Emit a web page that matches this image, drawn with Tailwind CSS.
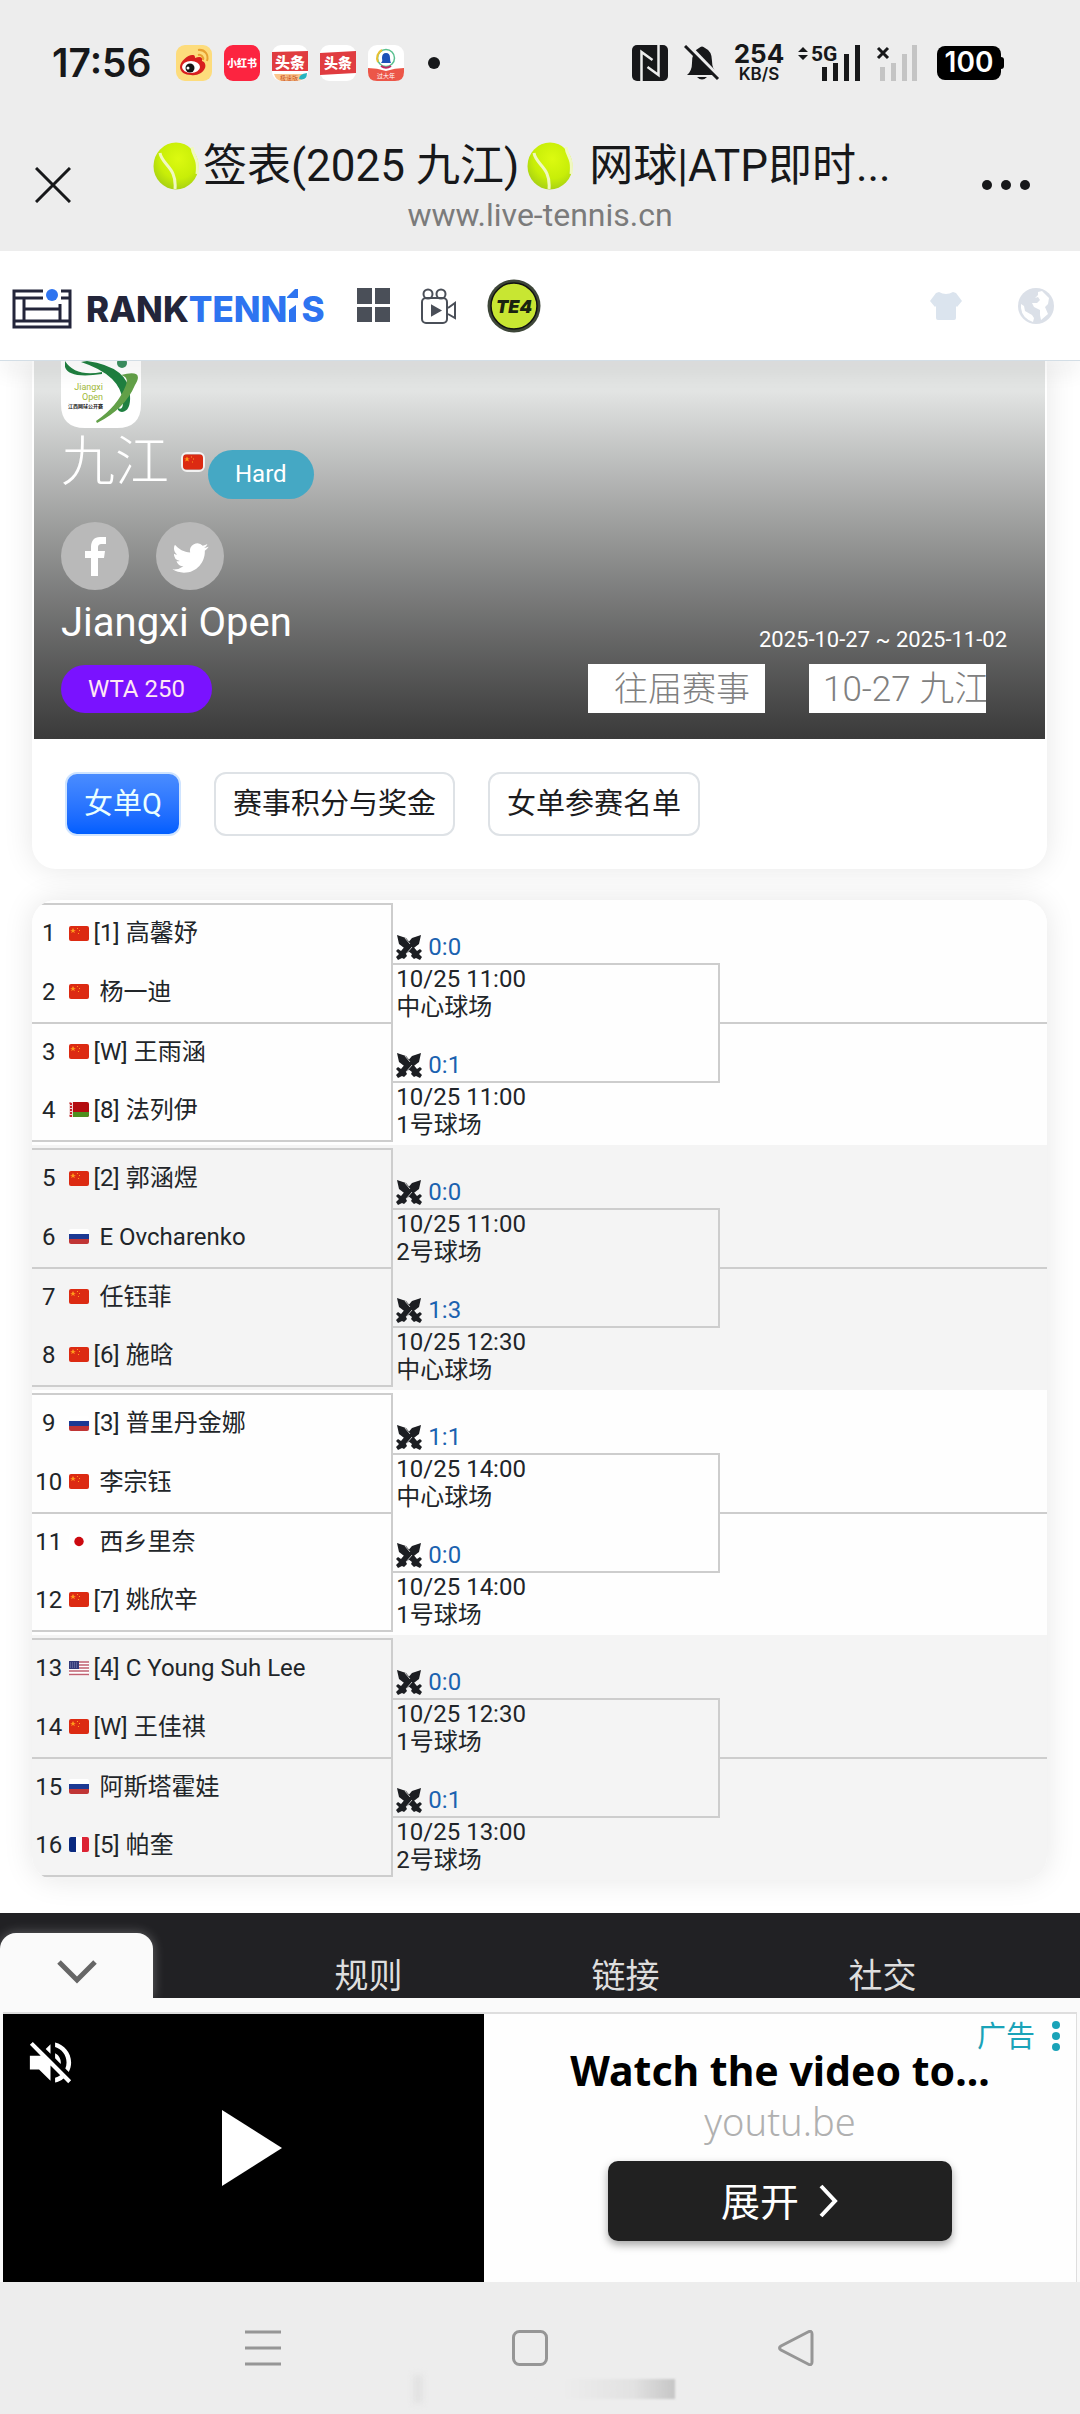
<!DOCTYPE html>
<html lang="zh-CN">
<head>
  <meta charset="UTF-8" />
  <meta name="viewport" content="width=device-width, initial-scale=1.0"/>
  <title>签表(2025 九江) 网球|ATP即时比分</title>
  <script src="https://cdn.jsdelivr.net/npm/@tailwindcss/browser@4"></script>
</head>
<body class="bg-white font-[Roboto,'Noto_Sans_CJK_SC',sans-serif] text-[#212529] text-2xl">

<!-- Shared icons -->
<svg class="absolute size-0">
  <defs>
    <radialGradient id="ballFill" cx=".55" cy=".35" r=".7"><stop offset="0" stop-color="#dcfa10"/><stop offset=".6" stop-color="#c8ee08"/><stop offset="1" stop-color="#a2cc14"/></radialGradient>
  </defs>
  <symbol id="ball" viewBox="0 0 46 48">
    <ellipse cx="23" cy="24" rx="22.500" ry="23.500" fill="url(#ballFill)"/>
    <path d="M7 11c2 12 17 14 15 36M39 5c1 10 7 10 5 27" fill="none" stroke="#f0f8c0" stroke-width="3"/>
  </symbol>
  <symbol id="cn" viewBox="0 0 20 15">
    <rect width="20" height="15" rx="2" fill="#dc2a12"/>
    <path d="M4 2l1 2h2L5 5l1 2-2-1-2 1 1-2-2-1h2z" fill="#ff9a1c"/><path d="M8 2h1v1H8zM10 4h1v1h-1zM9 7h1v1H9z" fill="#ff9a1c"/>
  </symbol>
  <symbol id="ru" viewBox="0 0 20 15"><rect width="20" height="15" rx="2" fill="#fff"/><path d="M0 5h20v5H0z" fill="#1c3a94"/><path d="M0 10h20v3a2 2 0 0 1-2 2H2a2 2 0 0 1-2-2z" fill="#c03535"/></symbol>
  <symbol id="by" viewBox="0 0 20 15"><rect width="20" height="15" rx="2" fill="#b40c10"/><path d="M4 10h16v3a2 2 0 0 1-2 2H4z" fill="#4d8f1e"/><path d="M0 2l2-2h2v15H2l-2-2z" fill="#f0d8d8"/><path d="M2 1v14" stroke="#c8202a" stroke-width="2" stroke-dasharray="2 1"/></symbol>
  <symbol id="jp" viewBox="0 0 20 15"><rect width="20" height="15" rx="2" fill="#fff"/><circle cx="10" cy="7.5" r="4.7" fill="#cc0a10"/></symbol>
  <symbol id="us" viewBox="0 0 20 15"><rect width="20" height="15" rx="2" fill="#fff"/><path d="M0 1h20M0 4h20M0 7h20M0 10h20M0 13.500h20" stroke="#c06070" stroke-width="1.3"/><path d="M0 0h10v8H0z" fill="#343a78"/><path d="M1 2h8M1 4h8M1 6h8" stroke="#9aa0c8" stroke-width=".8" stroke-dasharray="1 1"/></symbol>
  <symbol id="fr" viewBox="0 0 20 15"><rect width="20" height="15" rx="2" fill="#fff"/><path d="M7 0v15H2a2 2 0 0 1-2-2V2a2 2 0 0 1 2-2z" fill="#0b2a80"/><path d="M13 0h5a2 2 0 0 1 2 2v11a2 2 0 0 1-2 2h-5z" fill="#dc2434"/></symbol>
  <symbol id="swords" viewBox="0 0 26 25">
    <path d="M1 0l9 3 11 13 3-2 2 2-3 3 3 3-2 3-4-2-2 1-3-3 1-2L3 9z" fill="#1c1e22"/>
    <path d="M25 0l-9 3L5 16l-3-2-2 2 3 3-3 3 2 3 4-2 2 1 3-3-1-2L23 9z" fill="#1c1e22"/>
    <path d="M9 3l5 6M10 19l6-7" stroke="#eee" stroke-width=".8"/>
  </symbol>
</svg>

<div class="flex min-h-screen flex-col">

<!-- Phone status bar and browser title -->
<div class="bg-[#ededed] pt-[45px] pb-4">
  <div class="flex h-9 items-center justify-between pr-[76px] pl-[52px] text-[#17181a]">
    <div class="flex items-center">
      <span class="w-31 font-[Inter,sans-serif] text-[39px] leading-9 font-semibold">17:56</span>
      <div class="flex items-center gap-3">
        <svg class="size-9" viewBox="0 0 36 36"><rect width="36" height="36" rx="9" fill="#fddc7c"/><path d="M4 22c0-6 9-13 13-12 2 0 2 2 2 3 5-2 8-1 7 3 3 1 4 4 3 7-2 5-8 8-14 7-6 0-11-3-11-8z" fill="#d81e1e"/><ellipse cx="15" cy="22" rx="9" ry="6" fill="#fff"/><circle cx="14" cy="23" r="4.500" fill="#141414"/><circle cx="12" cy="23" r="1.500" fill="#fff"/><path d="M22 5c7-1 11 5 9 11M22 10c3-1 6 2 5 5" fill="none" stroke="#e8a030" stroke-width="2"/></svg>
        <svg class="size-9" viewBox="0 0 36 36"><rect width="36" height="36" rx="9" fill="#fc2440"/><text x="18" y="22" text-anchor="middle" font-size="10" font-weight="900" fill="#fff">小红书</text></svg>
        <svg class="size-9" viewBox="0 0 36 36"><rect width="36" height="36" rx="9" fill="#fff"/><path d="M0 7l36-1v20H0z" fill="#e03c40"/><text x="18" y="23" text-anchor="middle" font-size="15" font-weight="900" fill="#fff">头条</text><path d="M2 29h32q-2 7-9 7H10q-6 0-8-7z" fill="#fbc58c"/><text x="17" y="35" text-anchor="middle" font-size="6" fill="#c85020">极速版</text><path d="M27 34q0-5 8-6 0 8-8 6z" fill="#25b4c0"/></svg>
        <svg class="size-9" viewBox="0 0 36 36"><rect width="36" height="36" rx="9" fill="#fff"/><path d="M0 8l36-2v22L0 30z" fill="#e03c40"/><text x="18" y="23" text-anchor="middle" font-size="14" font-weight="900" fill="#fff">头条</text></svg>
        <svg class="size-9" viewBox="0 0 36 36"><rect width="36" height="36" rx="9" fill="#fff"/><circle cx="18" cy="13" r="8.500" fill="none" stroke="#5ac090" stroke-width="1.500"/><path d="M10 17a9 9 0 0 1 4-12" fill="none" stroke="#e8c030" stroke-width="2"/><path d="M13 21a9 9 0 0 0 10 0" fill="none" stroke="#c02860" stroke-width="2"/><path d="M13 18q2-2 1-5 0-5 4-5t4 5q0 3 1 5z" fill="#1c50b8"/><path d="M0 23q9 0 18 3 9-3 18-3v4q0 9-9 9H9q-9 0-9-9z" fill="#ec5648"/><text x="18" y="33" text-anchor="middle" font-size="6" fill="#fff">过大年</text></svg>
      </div>
      <span class="ml-6 size-3 rounded-full bg-[#17181a]"></span>
    </div>
    <div class="flex items-center">
      <svg class="size-9" viewBox="0 0 36 36"><rect width="36" height="36" rx="5" fill="#17181a"/><path d="M9.500 36V7l11 8M26.500 0v30l-11-8" fill="none" stroke="#ededed" stroke-width="2.500"/></svg>
      <svg class="ml-4 size-9" viewBox="0 0 36 36" fill="#17181a"><path d="M3 30q5-4 5-12 0-12 7-15 3-3 6 0 7 3 7 13 0 8 5 12v2z"/><path d="M13 32h10q-5 5-10 0z"/><path d="M3-1l33 34" stroke="#ededed" stroke-width="4"/><path d="M1 1l33 33" stroke="#17181a" stroke-width="3"/></svg>
      <div class="ml-3 w-[54px] text-center font-[Inter,sans-serif]">
        <div class="text-[26px] leading-[22px] font-bold">254</div>
        <div class="text-[17px] leading-[18px] font-semibold">KB/S</div>
      </div>
      <svg class="ml-3 h-9 w-[66px] overflow-visible" viewBox="0 0 66 36" fill="#17181a"><path d="M0 7l5-5 5 5zM0 10l5 5 5-5z"/><text x="13" y="16" font-family="Roboto" font-size="21" font-weight="700">5G</text><path d="M24 22h5v14h-5zM35 18h5v18h-5zM46 9h5v27h-5zM57 0h5v36h-5z"/></svg>
      <svg class="ml-3 h-9 w-[42px]" viewBox="0 0 42 36" fill="#c4c4c4"><path d="M2 3l10 10M12 3L2 13" stroke="#17181a" stroke-width="3"/><path d="M4 22h5v14H4zM15 18h5v18h-5zM26 9h5v27h-5zM36 0h5v36h-5z"/></svg>
      <div class="ml-[19px] flex items-center">
        <span class="flex h-[34px] w-16 items-center justify-center rounded-lg bg-black font-[Inter,sans-serif] text-[28px] font-semibold text-white">100</span>
        <span class="h-3 w-[3px] rounded-r bg-black"></span>
      </div>
    </div>
  </div>

  <div class="mt-[54px] flex h-[100px] items-center">
    <button class="w-[153px] pl-[35px]" aria-label="关闭">
      <svg class="size-9" viewBox="0 0 36 36"><path d="M1 1l34 34M35 1L1 35" stroke="#17181a" stroke-width="3"/></svg>
    </button>
    <div class="min-w-0 flex-1">
      <div class="flex h-15 items-center text-[44px] whitespace-nowrap text-[#17181a]">
        <svg class="h-12 w-[46px] shrink-0"><use href="#ball"/></svg><span class="pl-1">签表(2025 九江)</span><svg class="ml-2 h-12 w-[46px] shrink-0"><use href="#ball"/></svg><span class="pl-4">网球|ATP即时...</span>
      </div>
      <div class="text-center text-[32px] leading-[38px] text-[#7b7b7b]">www.live-tennis.cn</div>
    </div>
    <button class="flex w-[153px] justify-end gap-[9px] pr-[50px]" aria-label="更多">
      <span class="size-2.5 rounded-full bg-[#17181a]"></span>
      <span class="size-2.5 rounded-full bg-[#17181a]"></span>
      <span class="size-2.5 rounded-full bg-[#17181a]"></span>
    </button>
  </div>
</div>

<!-- Site header -->
<header class="relative z-10 flex h-[110px] items-center border-b border-[#d3dee6] bg-white pr-[26px] pl-3 shadow-[0_16px_16px_rgba(0,0,0,0.04)]">
  <a href="#" class="flex items-center pt-1.5">
    <svg class="h-10 w-[60px]" viewBox="0 0 60 40" fill="none" stroke="#23253a" stroke-width="3"><path d="M31 2H2v36h56V2h-9M2 9h29M2 32h56M12 9v23M12 20h36M48 15v17M49 9h9"/><circle cx="40" cy="6" r="6" fill="#2e74f0" stroke="none"/></svg>
    <span class="ml-3.5 flex items-center font-[Inter,sans-serif] text-[35px] leading-10 font-extrabold text-[#23253a]">RANK<span class="text-[#2e74f0]">TENN</span><svg class="mr-0.5 h-10 w-3" viewBox="0 0 12 40" fill="#2e74f0"><path d="M-1 9L11-3V9zM2 21l7-5v17H2z"/></svg><span class="text-[#2e74f0]">S</span></span>
  </a>
  <a href="#" class="ml-8" aria-label="菜单"><svg class="h-[35px] w-[33px]" viewBox="0 0 33 35" fill="#4a4f58"><path d="M0 0h15v16H0zM18 0h15v16H18zM0 19h15v15H0zM18 19h15v15H18z"/></svg></a>
  <a href="#" class="ml-[31px]" aria-label="视频"><svg class="h-9 w-[35px]" viewBox="0 0 35 36" fill="none" stroke="#4a4f58" stroke-width="2"><rect x="1" y="10" width="25" height="25" rx="4"/><circle cx="7" cy="6" r="4.500"/><circle cx="20" cy="6" r="4.500"/><path d="M27 20l7-5v15l-7-4"/><path d="M11 18v9l8-4.500z" fill="#4a4f58"/></svg></a>
  <a href="#" class="ml-[31px]" aria-label="TE4"><svg class="size-[54px]" viewBox="0 0 54 54"><circle cx="27" cy="27" r="26.500" fill="#3d4638"/><circle cx="27" cy="27" r="23" fill="#c8e632" stroke="#111" stroke-width="1.500"/><text x="27" y="34" text-anchor="middle" font-family="Inter" font-size="18" font-weight="900" font-style="italic" fill="#1a2410">TE4</text></svg></a>
  <a href="#" class="ml-auto" aria-label="主题"><svg class="h-7 w-8" viewBox="0 0 32 28" fill="#dbe4ee"><path d="M9 0q7 4 14 0l3 1 6 8-5 6-1-1v12q0 2-2 2H8q-2 0-2-2V14l-1 1-5-6 6-8z"/></svg></a>
  <a href="#" class="ml-14" aria-label="语言"><svg class="size-9" viewBox="0 0 36 36"><circle cx="18" cy="18" r="18" fill="#dbe0e8"/><path d="M20 4l4-1 7 7-1 6-3 3 3 7-7 6-1-5 0-5-6-3-2-4 5 0 3-3-2-3-3 1 3-3zM3 16l3 2 1 5 7 4 2 3-1 4q-11-4-12-14z" fill="#fff"/></svg></a>
</header>

<main class="bg-white pr-[33px] pb-[33px] pl-8">
  <!-- Tournament card -->
  <section class="overflow-hidden rounded-b-3xl bg-white shadow-[0_0_30px_rgba(0,0,0,0.10)]">
    <div class="mx-0.5 flex justify-between bg-linear-to-b from-[#e2e4e3] from-8% to-[#3a3a3a] pr-[38px] pb-[26px] pl-[27px] text-white">
      <div>
        <svg class="h-[67px] w-20" viewBox="0 0 80 67"><path d="M0 0h80v43q0 24-24 24H24Q0 67 0 43z" fill="#fff"/><path d="M4 0q10 16 37 11v2Q8 18 4 6zM26 0q42 6 43 34 1 16-8 17-5-1-4-4 5 3 5-6Q60 14 20 1z" fill="#1f8040"/><path d="M60 14q24-6 14 10Q64 48 36 62l-1-2q22-15 30-36 3-8-5-10z" fill="#62a048"/><circle cx="61" cy="2" r="5" fill="#3c9060"/><text x="42" y="29" text-anchor="end" font-size="9" fill="#a0b838">Jiangxi</text><text x="42" y="39" text-anchor="end" font-size="9" fill="#a0b838">Open</text><text x="42" y="47" text-anchor="end" font-size="5" font-weight="700" fill="#222">江西网球公开赛</text></svg>
        <div class="flex h-[72px] items-start">
          <h1 class="text-[54px] leading-[70px] font-light">九江</h1>
          <svg class="mt-6 ml-3 h-5 w-6 rounded-md border-2 border-white/80"><use href="#cn"/></svg>
          <span class="mt-[22px] ml-[3px] rounded-full bg-[#45a8c4] px-[27px] text-2xl leading-[49px]">Hard</span>
        </div>
        <div class="mt-[22px] flex gap-[27px]">
          <a href="#" class="flex size-[68px] items-center justify-center rounded-full bg-[#b9b9b9]" aria-label="Facebook"><svg class="h-[39px] w-[21px]" viewBox="0 0 21 39" fill="#fff"><path d="M21 0v7h-4c-3 0-4 1-4 4v3h7l-1 7h-6v18H6V21H0v-7h6V10C6 4 9 0 15 0z"/></svg></a>
          <a href="#" class="flex size-[68px] items-center justify-center rounded-full bg-[#b9b9b9]" aria-label="Twitter"><svg class="mt-1 h-9 w-[37px]" viewBox="0 0 24 24" fill="#fff"><path d="M23.953 4.570a10 10 0 01-2.825.775 4.958 4.958 0 002.163-2.723c-.951.555-2.005.959-3.127 1.184a4.920 4.920 0 00-8.384 4.482C7.690 8.095 4.067 6.130 1.640 3.162a4.822 4.822 0 00-.666 2.475c0 1.710.870 3.213 2.188 4.096a4.904 4.904 0 01-2.228-.616v.060a4.923 4.923 0 003.946 4.827 4.996 4.996 0 01-2.212.085 4.936 4.936 0 004.604 3.417 9.867 9.867 0 01-6.102 2.105c-.390 0-.779-.023-1.170-.067a13.995 13.995 0 007.557 2.209c9.053 0 13.998-7.496 13.998-13.985 0-.210 0-.420-.015-.630A9.935 9.935 0 0024 4.590z"/></svg></a>
        </div>
        <div class="mt-[9px] text-[40px] leading-12">Jiangxi Open</div>
        <div class="mt-[18px] w-fit rounded-full bg-[#7a12ff] px-[27px] text-2xl leading-12 text-[#ffe6f4]">WTA 250</div>
      </div>
      <div class="flex flex-col items-end justify-end">
        <div class="text-[22px] leading-7">2025-10-27 ~ 2025-11-02</div>
        <div class="mt-2.5 mr-[21px] flex gap-11">
          <input type="text" aria-label="往届赛事" value="往届赛事" class="h-[49px] w-[177px] bg-white pb-1 pl-[26px] text-[34px] font-light text-[#808080]">
          <input type="text" aria-label="赛事日期" value="10-27 九江" class="h-[49px] w-[177px] bg-white pb-1.5 pl-3.5 text-[35px] font-light text-[#808080]">
        </div>
      </div>
    </div>
    <nav class="flex gap-[33px] p-[33px] text-[29px] text-[#1c1c1e]">
      <button class="h-16 rounded-xl border-2 border-[#cfe4ff] bg-linear-to-b from-[#4a8cff] to-[#005eff] px-[17px] text-[#eaffff]">女单Q</button>
      <button class="h-16 rounded-xl border-2 border-[#dee2e6] px-[17px]">赛事积分与奖金</button>
      <button class="h-16 rounded-xl border-2 border-[#dee2e6] px-[17px]">女单参赛名单</button>
    </nav>
  </section>

  <!-- Draw -->
  <section class="mt-[31px] overflow-hidden rounded-3xl shadow-[0_0_30px_rgba(0,0,0,0.10)]">
    <table id="draw" class="w-full table-fixed border-separate border-spacing-0 text-2xl leading-7">
      <colgroup><col class="w-[3.500%]"><col class="w-[32.100%]"><col class="w-[32.200%]"><col></colgroup>
    </table>
  </section>
</main>

<!-- Footer -->
<footer class="relative h-[85px] overflow-hidden bg-[#212124]">
  <div class="grid grid-cols-3 pt-[43px] pr-[69px] pl-60 text-center text-[34px] leading-10 text-[#dedede]">
    <a href="#">规则</a>
    <a href="#">链接</a>
    <a href="#">社交</a>
  </div>
  <button class="absolute bottom-0 left-0 flex h-[65px] w-[153px] items-center justify-center rounded-t-2xl bg-[#fafafa] shadow-[0_0_12px_rgba(255,255,255,0.3)]" aria-label="收起">
    <svg class="mt-3 h-6 w-10" viewBox="0 0 40 24"><path d="M2 2l18 18L38 2" fill="none" stroke="#666" stroke-width="5"/></svg>
  </button>
</footer>

<!-- Video ad -->
<aside class="bg-[#fafafa] px-[3px] pt-[14px]">
  <div class="grid h-[270px] grid-cols-[481fr_593fr] border-t-2 border-[#dedede] bg-[#fefefe]">
    <div class="relative flex items-center justify-center bg-black pl-4">
      <button class="absolute top-[21px] left-5" aria-label="静音"><svg class="size-[55px]" viewBox="0 0 24 24" fill="#fff"><path d="M16.500 12c0-1.770-1.020-3.290-2.500-4.030v2.210l2.450 2.450c.030-.200.050-.410.050-.630zm2.500 0c0 .940-.200 1.820-.540 2.640l1.510 1.510C20.630 14.910 21 13.500 21 12c0-4.280-2.990-7.860-7-8.770v2.060c2.890.860 5 3.540 5 6.710zM4.270 3L3 4.270 7.730 9H3v6h4l5 5v-6.730l4.250 4.250c-.670.520-1.420.930-2.250 1.180v2.060c1.380-.310 2.630-.950 3.690-1.810L19.730 21 21 19.730l-9-9L4.270 3zM12 4L9.910 6.090 12 8.180V4z"/></svg></button>
      <button aria-label="播放"><svg class="h-[76px] w-[60px]" viewBox="0 0 60 76" fill="#fff"><path d="M0 0l60 38L0 76z"/></svg></button>
    </div>
    <div class="relative flex flex-col items-center border-r border-[#dedede] pt-[31px] font-['Noto_Sans','Noto_Sans_CJK_SC',sans-serif]">
      <div class="text-[41px] leading-[50px] font-bold text-black">Watch the video to...</div>
      <div class="text-[38px] leading-[52px] font-light text-[#b0b0b0]">youtu.be</div>
      <button class="mt-3.5 flex h-20 w-[58%] items-center justify-center gap-5 rounded-[10px] bg-[#212121] text-[39px] text-white shadow-[0_4px_8px_rgba(0,0,0,0.35)]">
        展开
        <svg class="h-9 w-5" viewBox="0 0 20 36"><path d="M2 3l14 15L2 33" fill="none" stroke="#fff" stroke-width="4"/></svg>
      </button>
      <div class="absolute top-1 right-4 flex items-center gap-[17px] text-[#1aa3b8]">
        <span class="text-[29px] leading-9">广告</span>
        <span class="flex flex-col gap-[3px]"><i class="size-2 rounded-full bg-[#1aa3b8]"></i><i class="size-2 rounded-full bg-[#1aa3b8]"></i><i class="size-2 rounded-full bg-[#1aa3b8]"></i></span>
      </div>
    </div>
  </div>
</aside>

<!-- System navigation -->
<div class="relative flex min-h-[131px] flex-1 items-center justify-between bg-[#ededed] pr-[266px] pl-[245px]">
  <button aria-label="任务"><svg class="size-9" viewBox="0 0 36 36"><path d="M0 2h36M0 18h36M0 34h36" stroke="#969696" stroke-width="3"/></svg></button>
  <button aria-label="主页"><svg class="size-9" viewBox="0 0 36 36"><rect x="1.500" y="1.500" width="33" height="33" rx="6" fill="none" stroke="#969696" stroke-width="3"/></svg></button>
  <button aria-label="返回"><svg class="size-9" viewBox="0 0 36 36"><path d="M30 2q4-2 4 2v28q0 4-4 2L3 20q-3-2 0-4z" fill="none" stroke="#969696" stroke-width="3"/></svg></button>
  <div class="absolute bottom-[11px] left-[413px] flex h-7 w-[262px] items-center justify-between">
    <span class="h-7 w-2.5 bg-[#e2e2e2] blur-[3px]"></span>
    <span class="h-5 w-[140px] bg-linear-to-r from-[#ededed] from-20% via-[#e2e2e2] via-70% to-[#c6c6c6] blur-[1px]"></span>
  </div>
</div>

</div>

<!-- Draw data -->
<script>
  // [flag, seed, name]
  const players = [
    ['cn', '[1]', '高馨妤'], ['cn', '', '杨一迪'], ['cn', '[W]', '王雨涵'], ['by', '[8]', '法列伊'],
    ['cn', '[2]', '郭涵煜'], ['ru', '', 'E Ovcharenko'], ['cn', '', '任钰菲'], ['cn', '[6]', '施晗'],
    ['ru', '[3]', '普里丹金娜'], ['cn', '', '李宗钰'], ['jp', '', '西乡里奈'], ['cn', '[7]', '姚欣辛'],
    ['us', '[4]', 'C Young Suh Lee'], ['cn', '[W]', '王佳祺'], ['ru', '', '阿斯塔霍娃'], ['fr', '[5]', '帕奎'],
  ];
  // [score, time, court]
  const matches = [
    ['0:0', '10/25 11:00', '中心球场'], ['0:1', '10/25 11:00', '1号球场'],
    ['0:0', '10/25 11:00', '2号球场'], ['1:3', '10/25 12:30', '中心球场'],
    ['1:1', '10/25 14:00', '中心球场'], ['0:0', '10/25 14:00', '1号球场'],
    ['0:0', '10/25 12:30', '1号球场'], ['0:1', '10/25 13:00', '2号球场'],
  ];

  const player = (i, line) => {
    const [flag, seed, name] = players[i];
    return `<td class="${line} border-[#cdcdcd] pr-0.5 pb-0.5 text-center whitespace-nowrap">${i + 1}</td>
      <td class="${line} border-r-2 border-[#cdcdcd] pb-0.5 whitespace-pre"><span class="flex items-center"><svg class="mr-[5px] ml-px h-[15px] w-5 shrink-0"><use href="#${flag}"/></svg>${seed} ${name}</span></td>`;
  };
  const score = (m) => `<a href="#" class="flex items-center gap-1.5 text-[#1b62b0]"><svg class="h-[25px] w-[26px]"><use href="#swords"/></svg>${m[0]}</a>`;
  const info = (m) => `${m[1]}<br>${m[2]}`;

  let html = '';
  for (let g = 0; g < 4; g++) {
    const p = g * 4, a = matches[g * 2], b = matches[g * 2 + 1];
    html += `<tbody class="${g % 2 ? 'bg-[#f4f4f4]' : 'bg-[#fefefe]'}">
      <tr class="h-[3px]"><td colspan="4"></td></tr>
      <tr class="h-[60px]">${player(p, 'border-t-2')}
        <td class="pb-0.5 pl-[3px] align-bottom">${score(a)}</td><td rowspan="2"></td></tr>
      <tr class="h-[59px]">${player(p + 1, '')}
        <td class="border-t-2 border-r-2 border-[#cdcdcd] pl-[3px] align-top">${info(a)}</td></tr>
      <tr class="h-[59px]">${player(p + 2, 'border-t-2')}
        <td class="border-r-2 border-[#cdcdcd] pb-0.5 pl-[3px] align-bottom">${score(b)}</td><td rowspan="2" class="border-t-2 border-[#cdcdcd]"></td></tr>
      <tr class="h-[61px]">${player(p + 3, 'border-b-2')}
        <td class="border-t-2 border-[#cdcdcd] pl-[3px] align-top">${info(b)}</td></tr>
      <tr class="h-[3px]"><td colspan="4"></td></tr>
    </tbody>`;
  }
  document.getElementById('draw').insertAdjacentHTML('beforeend', html);
</script>

</body>
</html>
